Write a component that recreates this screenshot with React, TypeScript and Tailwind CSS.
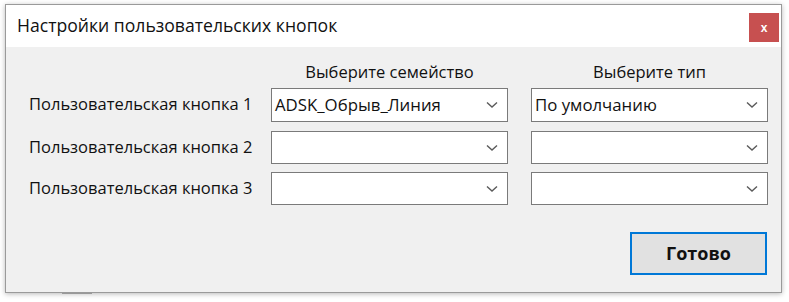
import React from "react";

const font = { fontFamily: '"Open Sans", "Noto Sans", sans-serif' };

function Chevron() {
  return (
    <svg width="12" height="8" viewBox="0 0 12 8" className="shrink-0">
      <path d="M1 1.5 L6 6 L11 1.5" fill="none" stroke="#5a5a5a" strokeWidth="1.4" />
    </svg>
  );
}

function Combo({ value }: { value?: string }) {
  return (
    <div className="w-[237px] h-full bg-white border border-[#7a7a7a] flex items-center pl-[3px] pr-[9px]">
      <span className="flex-1 text-[16.8px] text-[#111] leading-none">{value ?? ""}</span>
      <Chevron />
    </div>
  );
}

function Row({ label, fam, type, cls }: { label: string; fam?: string; type?: string; cls: string }) {
  return (
    <div className={`flex items-center ${cls}`}>
      <div className="w-[242px] text-[16.5px] text-[#111] leading-none -mt-[1px]">{label}</div>
      <Combo value={fam} />
      <div className="w-[23px]" />
      <Combo value={type} />
    </div>
  );
}

export default function App() {
  return (
    <div className="w-[789px] h-[302px] bg-white pl-[5px] pt-[4px]" style={font}>
      <div className="w-[777px] h-[289px] border border-[#9a9a9a] bg-[#f0f0f0] flex flex-col shadow-[0_1px_5px_rgba(0,0,0,0.28)]">
        <div className="h-[42px] bg-white flex items-start">
          <div className="flex-1 pl-[11px] pt-[7px] text-[17.6px] text-[#111]">Настройки пользовательских кнопок</div>
          <div className="mt-[8px] mr-[2px] w-[30px] h-[29px] bg-[#c75050] flex items-center justify-center text-white text-[12px] font-bold leading-none" style={{ fontFamily: '"Liberation Sans", sans-serif' }}>
            x
          </div>
        </div>
        <div className="flex-1 pl-[23px] flex flex-col">
          <div className="flex mt-[14px] h-[22px] items-center">
            <div className="w-[242px]" />
            <div className="w-[237px] text-center text-[16.5px] text-[#111]">Выберите семейство</div>
            <div className="w-[23px]" />
            <div className="w-[237px] text-center text-[16.5px] text-[#111]">Выберите тип</div>
          </div>
          <Row label="Пользовательская кнопка 1" fam="ADSK_Обрыв_Линия" type="По умолчанию" cls="mt-[5px] h-[34px]" />
          <Row label="Пользовательская кнопка 2" cls="mt-[9px] h-[33px]" />
          <Row label="Пользовательская кнопка 3" cls="mt-[8px] h-[33px]" />
          <div className="flex mt-[27px] pl-[601px]">
            <div className="w-[137px] h-[43px] border-2 border-[#0078d7] bg-[#e1e1e1] flex items-center justify-center text-[18px] font-bold text-[#111]">
              Готово
            </div>
          </div>
        </div>
      </div>
      <div className="ml-[57px] w-[30px] h-[1px] bg-[#999]" />
    </div>
  );
}
